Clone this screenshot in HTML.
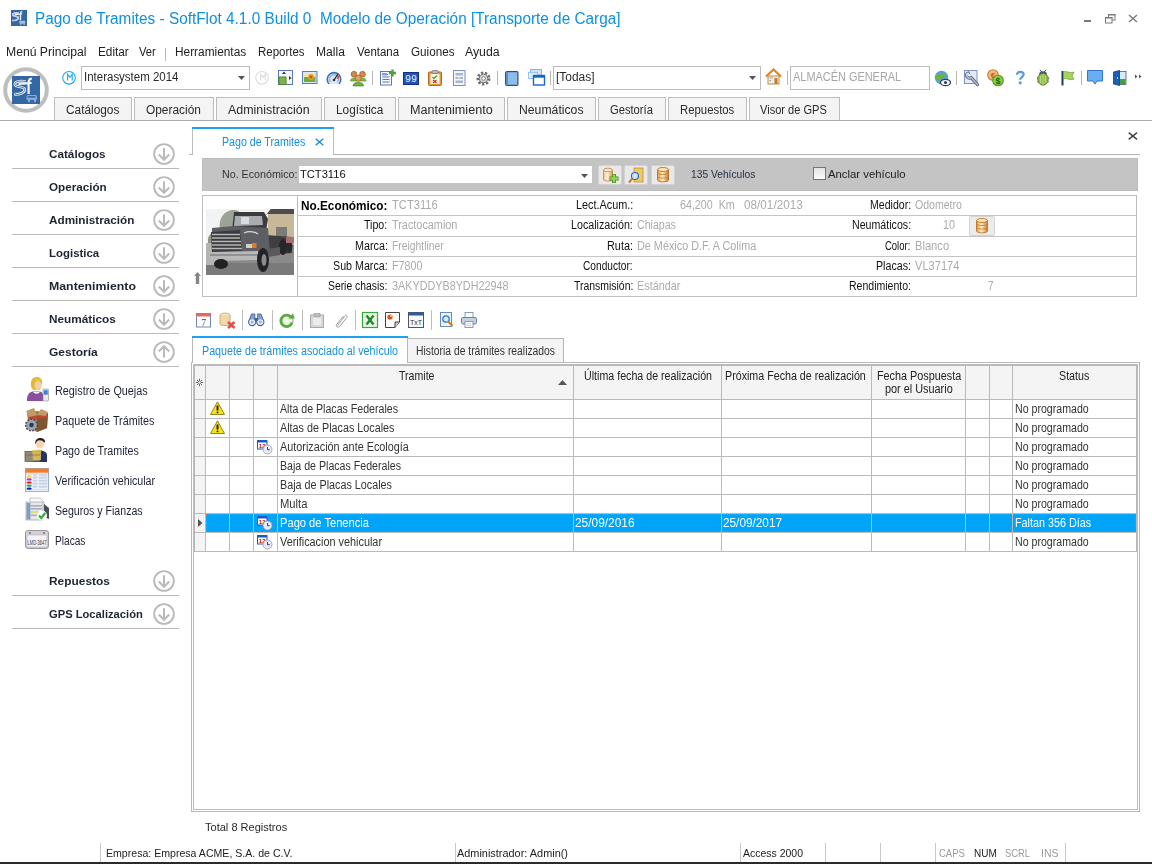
<!DOCTYPE html>
<html><head><meta charset="utf-8"><style>
html,body{margin:0;padding:0;}
body{width:1152px;height:864px;overflow:hidden;position:relative;background:#fff;font-family:"Liberation Sans", sans-serif;}
.a{position:absolute;}
svg.a{overflow:visible;}
.t{position:absolute;white-space:nowrap;line-height:normal;transform-origin:0 0;}
.bl{display:inline-block;width:0;height:0;}
</style></head><body>
<svg class="a" style="left:11px;top:10px;" width="16" height="16" viewBox="0 0 16 16"><rect width="16" height="16" fill="#3368a4"/><g transform="scale(0.5714) translate(-12,-12)"><path d="M25.5 17.5 C20 16.2 14.5 17.5 14.8 20.5 C15.2 23.5 24.5 22 24.8 25.5 C25 29 19 30.5 15.5 30.5 L15 29" stroke="#eef2f8" stroke-width="2.8" fill="none"/><path d="M25.5 17.5 C20 16.2 14.5 17.5 14.8 20.5 C15.2 23.5 24.5 22 24.8 25.5 C25 29 19 30.5 15.5 30.5 L15 29" stroke="#7f9cc4" stroke-width="1" fill="none"/><path d="M28.6 30 V19 C28.6 15.5 30 14.5 31.8 14.8 M18.5 19.8 L31.5 18.8" stroke="#eef2f8" stroke-width="2.4" fill="none"/><rect x="26.5" y="31" width="10.5" height="5" rx="1.5" fill="#a8bedc"/><circle cx="29" cy="37" r="1.3" fill="#a8bedc"/><circle cx="35" cy="37" r="1.3" fill="#a8bedc"/></g></svg>
<div class="a" style="left:1084px;top:20px;width:7px;height:2px;background:#7a7a7a;"></div>
<svg class="a" style="left:1104px;top:13px;" width="12" height="11" viewBox="0 0 12 11"><rect x="4.5" y="1.5" width="6.5" height="5.5" fill="none" stroke="#7a7a7a" stroke-width="1"/><rect x="4" y="1" width="7.5" height="1.5" fill="#7a7a7a"/><rect x="1.5" y="4.5" width="6.5" height="5.5" fill="#fff" stroke="#7a7a7a" stroke-width="1"/><rect x="1" y="4" width="7.5" height="1.5" fill="#7a7a7a"/></svg>
<svg class="a" style="left:1128px;top:14px;" width="10" height="9" viewBox="0 0 10 9"><path d="M1 1 L9 8 M9 1 L1 8" stroke="#7a7a7a" stroke-width="1.4"/></svg>
<div class="a" style="left:165px;top:48px;width:1px;height:13px;background:#b9b9b9;"></div>
<svg class="a" style="left:0px;top:64px;" width="52" height="52" viewBox="0 0 52 52"><circle cx="26" cy="26" r="20.8" fill="#fff" stroke="#bebebe" stroke-width="4"/><rect x="12" y="12" width="28" height="28" fill="#3368a4"/><path d="M25.5 17.5 C20 16.2 14.5 17.5 14.8 20.5 C15.2 23.5 24.5 22 24.8 25.5 C25 29 19 30.5 15.5 30.5 L15 29" stroke="#f4f6fa" stroke-width="2.6" fill="none"/><path d="M25.5 17.5 C20 16.2 14.5 17.5 14.8 20.5 C15.2 23.5 24.5 22 24.8 25.5 C25 29 19 30.5 15.5 30.5 L15 29" stroke="#3368a4" stroke-width="0.9" fill="none"/><path d="M28.6 30 V19 C28.6 15.5 30 14.5 31.8 14.8 M18.5 19.8 L31.5 18.8" stroke="#f4f6fa" stroke-width="2.2" fill="none"/><rect x="26.5" y="31" width="10.5" height="5" rx="1.5" fill="#8eaad0"/><rect x="27.5" y="32" width="8" height="1.6" fill="#3368a4"/><circle cx="29" cy="37" r="1.2" fill="#8eaad0"/><circle cx="35" cy="37" r="1.2" fill="#8eaad0"/></svg>
<svg class="a" style="left:62px;top:71px;" width="15" height="15" viewBox="0 0 15 15"><circle cx="7" cy="6.8" r="6.3" fill="none" stroke="#16a6fb" stroke-width="1.1"/><path d="M5.6 9.4 V3.4 L7.9 6.4 L10.2 3.4 V9.4" stroke="#16a6fb" stroke-width="1.1" fill="none"/></svg>
<div class="a" style="left:81px;top:66px;width:169px;height:24px;background:#fff;border:1px solid #bcbcbc;box-sizing:border-box;"></div>
<svg class="a" style="left:238px;top:76px;" width="8" height="5" viewBox="0 0 8 5"><path d="M0 0 H7 L3.5 4 Z" fill="#555"/></svg>
<svg class="a" style="left:255px;top:71px;" width="15" height="15" viewBox="0 0 15 15"><circle cx="7" cy="6.8" r="6.3" fill="none" stroke="#dcdcdc" stroke-width="1.1"/><path d="M5.6 9.4 V3.4 L7.9 6.4 L10.2 3.4 V9.4" stroke="#dcdcdc" stroke-width="1.1" fill="none"/></svg>
<svg class="a" style="left:278px;top:70px;" width="16" height="16" viewBox="0 0 16 16"><rect x="0.5" y="0.5" width="14" height="14" fill="#f4f6fb" stroke="#5a78b8"/><rect x="1" y="7" width="7" height="7.5" fill="#7fb24a" stroke="#4d8a2a"/><path d="M4 4 L6 1.5 L8 4Z M11 6 L13.5 8 L11 10Z" fill="#333"/></svg>
<svg class="a" style="left:302px;top:71px;" width="16" height="13" viewBox="0 0 16 13"><rect x="0.5" y="0.5" width="14.5" height="12" fill="#dfe8f6" stroke="#5c7cb8"/><rect x="2" y="2" width="11.5" height="9" fill="#6fae3c"/><rect x="2" y="2" width="11.5" height="4" fill="#f0e6b0"/><circle cx="9" cy="6" r="3" fill="#e69a2a"/><circle cx="9" cy="6" r="1.3" fill="#c05a10"/></svg>
<svg class="a" style="left:326px;top:71px;" width="16" height="15" viewBox="0 0 16 15"><path d="M3 13 A6.8 6.8 0 1 1 13 13" fill="#dbe7f5" stroke="#3f73b8" stroke-width="1.6"/><path d="M4.5 11 A4.5 4.5 0 1 1 11.5 11" fill="none" stroke="#8fb6e6" stroke-width="1.5"/><path d="M8 9 L12 3" stroke="#222" stroke-width="1.3"/><path d="M11.5 8 L13 5" stroke="#e03a2a" stroke-width="1.6"/><circle cx="8" cy="9" r="1.3" fill="#333"/></svg>
<svg class="a" style="left:350px;top:70px;" width="17" height="16" viewBox="0 0 17 16"><path d="M0.5 11 C0.5 7 7 7 7 11Z M9.5 11 C9.5 7 16 7 16 11Z" fill="#7cbf4a" stroke="#4a8a2a" stroke-width="0.6"/><circle cx="4" cy="4.2" r="2.9" fill="#d08a4a" stroke="#8a5020" stroke-width="0.6"/><circle cx="12.5" cy="4.2" r="2.9" fill="#d08a4a" stroke="#8a5020" stroke-width="0.6"/><path d="M3 16 C3 11 13.5 11 13.5 16Z" fill="#6ab43a" stroke="#3e7a20" stroke-width="0.6"/><circle cx="8.2" cy="8.2" r="3.1" fill="#e0a060" stroke="#8a5020" stroke-width="0.6"/></svg>
<div class="a" style="left:372px;top:71px;width:1px;height:14px;background:#b5b5b5;"></div>
<svg class="a" style="left:380px;top:69px;" width="16" height="17" viewBox="0 0 16 17"><rect x="0.5" y="2.5" width="11" height="13.5" fill="#f5f8fc" stroke="#5a79b5"/><path d="M2.5 5.5 H8 M2.5 8 H9.5 M2.5 10.5 H9.5 M2.5 13 H9.5" stroke="#5a79b5" stroke-width="1"/><rect x="2" y="4" width="5" height="2.5" fill="#7fa3d8"/><path d="M12.5 0.5 V7.5 M9 4 H16" stroke="#4aa436" stroke-width="2.4"/></svg>
<svg class="a" style="left:403px;top:72px;" width="16" height="13" viewBox="0 0 16 13"><rect x="0" y="0" width="16" height="13" fill="#2154b8"/><rect x="0.5" y="0.5" width="15" height="12" fill="none" stroke="#11327a" stroke-width="1"/><text x="8" y="10.3" font-size="10" font-family="Liberation Mono" fill="#e6eeff" text-anchor="middle" textLength="12" lengthAdjust="spacingAndGlyphs">99</text></svg>
<svg class="a" style="left:428px;top:70px;" width="14" height="16" viewBox="0 0 14 16"><rect x="0.5" y="2" width="13" height="13.5" rx="1" fill="#e79a3c" stroke="#b9661a"/><rect x="2.5" y="4" width="9" height="10" fill="#fff6e6"/><rect x="4" y="0.5" width="6" height="3" rx="1" fill="#bbb" stroke="#777" stroke-width="0.8"/><path d="M4.5 7 L6 8.5 L9 5.5" stroke="#3a9a2a" stroke-width="1.2" fill="none"/><path d="M5 10 L8.5 13 M8.5 10 L5 13" stroke="#d02a2a" stroke-width="1.2"/></svg>
<svg class="a" style="left:453px;top:70px;" width="13" height="16" viewBox="0 0 13 16"><rect x="0.5" y="0.5" width="11.5" height="15" fill="#f2f5fa" stroke="#7b90b8"/><rect x="2.5" y="3" width="7.5" height="2.5" fill="#aab6cc"/><rect x="2.5" y="7" width="3" height="2" fill="#aab6cc"/><rect x="6.5" y="7" width="3.5" height="2" fill="#aab6cc"/><rect x="2.5" y="10.5" width="7.5" height="2.5" fill="#aab6cc"/></svg>
<svg class="a" style="left:476px;top:71px;" width="15" height="15" viewBox="0 0 15 15"><circle cx="7.5" cy="7.5" r="5.5" fill="none" stroke="#6d6d6d" stroke-width="3" stroke-dasharray="2.2 1.6"/><circle cx="7.5" cy="7.5" r="4.2" fill="#d8d8d8" stroke="#777" stroke-width="1"/><circle cx="7.5" cy="7.5" r="1.8" fill="#fff" stroke="#666" stroke-width="0.8"/></svg>
<div class="a" style="left:497px;top:71px;width:1px;height:14px;background:#b5b5b5;"></div>
<svg class="a" style="left:505px;top:71px;" width="14" height="15" viewBox="0 0 14 15"><rect x="0.5" y="0.5" width="12.5" height="14" rx="1" fill="#5b8fd0" stroke="#2a4f86"/><rect x="3" y="1.5" width="9" height="12" fill="#8fbde8"/></svg>
<svg class="a" style="left:528px;top:69px;" width="17" height="17" viewBox="0 0 17 17"><rect x="2.5" y="0.5" width="11" height="8" fill="#cfe3f8" stroke="#88b4e6"/><rect x="0.5" y="3.5" width="9" height="6" fill="#e0eefc" stroke="#9cc4ee"/><rect x="5.5" y="6.5" width="11" height="9.5" fill="#fff" stroke="#1b64c8" stroke-width="1.4"/><rect x="5.5" y="6.5" width="11" height="2.2" fill="#1b64c8"/></svg>
<div class="a" style="left:550px;top:71px;width:1px;height:14px;background:#b5b5b5;"></div>
<div class="a" style="left:553px;top:66px;width:208px;height:24px;background:#fff;border:1px solid #bcbcbc;box-sizing:border-box;"></div>
<svg class="a" style="left:749px;top:76px;" width="8" height="5" viewBox="0 0 8 5"><path d="M0 0 H7 L3.5 4 Z" fill="#555"/></svg>
<svg class="a" style="left:765px;top:68px;" width="17" height="17" viewBox="0 0 17 17"><path d="M1 8.5 L8.5 1.5 L16 8.5" stroke="#e0861e" stroke-width="2.2" fill="none"/><rect x="3" y="8" width="11" height="8" fill="#f4efe2" stroke="#c98a3a"/><rect x="9.5" y="10" width="3" height="6" fill="#c47a2a"/><path d="M4.5 10 h1.5 M4.5 12.5 h1.5 M6.5 10 h1.5" stroke="#7aa0c8" stroke-width="1.2"/></svg>
<div class="a" style="left:787px;top:71px;width:1px;height:14px;background:#b5b5b5;"></div>
<div class="a" style="left:790px;top:66px;width:140px;height:24px;background:#fff;border:1px solid #bcbcbc;box-sizing:border-box;"></div>
<svg class="a" style="left:934px;top:70px;" width="17" height="17" viewBox="0 0 17 17"><circle cx="7.5" cy="7.5" r="6.8" fill="#5aa0d8"/><path d="M2 5 C4 3 6 6 8 4 C9 3 11 3 12 5 C11 8 8 7 7 10 C6 12 3 10 2 8Z" fill="#6db43a"/><ellipse cx="11.5" cy="12.5" rx="5" ry="3.2" fill="#fff" stroke="#2a3f70" stroke-width="1.3"/><circle cx="11.5" cy="12.5" r="1.6" fill="#2a3f70"/></svg>
<div class="a" style="left:956px;top:71px;width:1px;height:14px;background:#b5b5b5;"></div>
<svg class="a" style="left:964px;top:70px;" width="17" height="17" viewBox="0 0 17 17"><rect x="0.5" y="0.5" width="12.5" height="13" fill="#e6ecf6" stroke="#7d95c4" stroke-width="1"/><path d="M4.2 3 C2 3.5 1.8 6.5 3.8 7.6 C5.2 8.4 6.5 8 7.2 7.6 L13.5 14.6" stroke="#5d6f8c" stroke-width="3.2" fill="none" stroke-linecap="round"/><path d="M4.2 3 C2 3.5 1.8 6.5 3.8 7.6 C5.2 8.4 6.5 8 7.2 7.6 L13.5 14.6" stroke="#b8c6dc" stroke-width="1.3" fill="none" stroke-linecap="round"/><circle cx="4" cy="4.5" r="1.3" fill="#e6ecf6"/></svg>
<svg class="a" style="left:987px;top:69px;" width="17" height="17" viewBox="0 0 17 17"><circle cx="6" cy="6" r="5.3" fill="#f3b97a" stroke="#d5782a" stroke-width="1.1"/><text x="6" y="9" font-size="8" font-family="Liberation Sans" fill="#c9561a" text-anchor="middle" font-weight="bold">€</text><circle cx="11" cy="11.5" r="5.3" fill="#8dcf3f" stroke="#4e9a1e" stroke-width="1.1"/><text x="11" y="15" font-size="9" font-family="Liberation Sans" fill="#1e5a0a" text-anchor="middle" font-weight="bold">$</text></svg>
<svg class="a" style="left:1015px;top:70px;" width="10" height="15" viewBox="0 0 10 15"><path d="M2 4.8 C1.8 1 8.8 0.8 8.6 4.5 C8.4 7 5.2 7.2 5.2 9.8" stroke="#5a9ae0" stroke-width="2.3" fill="none"/><circle cx="5.2" cy="12.8" r="1.6" fill="#5a9ae0"/></svg>
<svg class="a" style="left:1036px;top:69px;" width="14" height="17" viewBox="0 0 14 17"><path d="M4 0.8 L5.8 3.2 M10 0.8 L8.2 3.2" stroke="#2a3a5a" stroke-width="0.9"/><path d="M0.8 9 H2.5 M11.5 9 H13.2 M1.2 13 L2.8 12 M12.8 13 L11.2 12" stroke="#2a3a5a" stroke-width="0.9"/><ellipse cx="7" cy="5" rx="3.8" ry="2.8" fill="#4a5a78"/><ellipse cx="7" cy="10.2" rx="5.2" ry="6" fill="#92c04a" stroke="#4a6a2a" stroke-width="0.8"/><path d="M7 5 V16 M4.5 7 V14 M9.5 7 V14" stroke="#c8e490" stroke-width="0.7"/></svg>
<svg class="a" style="left:1061px;top:70px;" width="14" height="16" viewBox="0 0 14 16"><path d="M1.5 1 V15.5" stroke="#223a5a" stroke-width="2"/><path d="M2.5 2 C5 0 8 4 13 2 L11 6 L13 9 C8 11 5 7 2.5 9Z" fill="#a6d45c" stroke="#6a9a32" stroke-width="0.7"/></svg>
<div class="a" style="left:1081px;top:71px;width:1px;height:14px;background:#b5b5b5;"></div>
<svg class="a" style="left:1087px;top:70px;" width="17" height="16" viewBox="0 0 17 16"><path d="M0.5 0.5 H15.5 V11 H10 L8 14 L6 11 H0.5Z" fill="#6aaef0" stroke="#2f75c9" stroke-width="1"/></svg>
<svg class="a" style="left:1113px;top:70px;" width="14" height="16" viewBox="0 0 14 16"><rect x="6" y="1.5" width="7" height="13" fill="#d8ecf8" stroke="#555" stroke-width="0.8"/><rect x="6.5" y="9" width="6" height="5" fill="#3da23a"/><path d="M0.5 2 L6.5 0.5 V15.5 L0.5 14Z" fill="#1e5fb8" stroke="#123f80" stroke-width="0.8"/><circle cx="4.5" cy="8" r="0.7" fill="#fff"/></svg>
<svg class="a" style="left:1135px;top:74px;" width="7" height="6" viewBox="0 0 7 6"><path d="M0 0.5 L2.5 2.5 L0 4.5Z M4 0.5 L6.5 2.5 L4 4.5Z" fill="#555"/></svg>
<div class="a" style="left:0px;top:120px;width:1152px;height:1px;background:#ababab;"></div>
<div class="a" style="left:54px;top:97px;width:78px;height:23px;background:#f4f4f4;border:1px solid #bdbdbd;box-sizing:border-box;border-bottom:none;"></div>
<div class="a" style="left:134px;top:97px;width:80px;height:23px;background:#f4f4f4;border:1px solid #bdbdbd;box-sizing:border-box;border-bottom:none;"></div>
<div class="a" style="left:216px;top:97px;width:106px;height:23px;background:#f4f4f4;border:1px solid #bdbdbd;box-sizing:border-box;border-bottom:none;"></div>
<div class="a" style="left:324px;top:97px;width:72px;height:23px;background:#f4f4f4;border:1px solid #bdbdbd;box-sizing:border-box;border-bottom:none;"></div>
<div class="a" style="left:398px;top:97px;width:107px;height:23px;background:#f4f4f4;border:1px solid #bdbdbd;box-sizing:border-box;border-bottom:none;"></div>
<div class="a" style="left:507px;top:97px;width:89px;height:23px;background:#f4f4f4;border:1px solid #bdbdbd;box-sizing:border-box;border-bottom:none;"></div>
<div class="a" style="left:598px;top:97px;width:68px;height:23px;background:#f4f4f4;border:1px solid #bdbdbd;box-sizing:border-box;border-bottom:none;"></div>
<div class="a" style="left:668px;top:97px;width:79px;height:23px;background:#f4f4f4;border:1px solid #bdbdbd;box-sizing:border-box;border-bottom:none;"></div>
<div class="a" style="left:749px;top:97px;width:91px;height:23px;background:#f4f4f4;border:1px solid #bdbdbd;box-sizing:border-box;border-bottom:none;"></div>
<svg class="a" style="left:153px;top:142.9px;" width="22" height="22" viewBox="0 0 22 22"><circle cx="11" cy="11" r="9.85" fill="none" stroke="#bababa" stroke-width="1.9"/><path d="M11 5.2 V16.5 M5.8 11.5 L11 16.8 L16.2 11.5" stroke="#bababa" stroke-width="2" fill="none"/></svg>
<div class="a" style="left:12px;top:168px;width:167px;height:1px;background:#bababa;"></div>
<svg class="a" style="left:153px;top:175.9px;" width="22" height="22" viewBox="0 0 22 22"><circle cx="11" cy="11" r="9.85" fill="none" stroke="#bababa" stroke-width="1.9"/><path d="M11 5.2 V16.5 M5.8 11.5 L11 16.8 L16.2 11.5" stroke="#bababa" stroke-width="2" fill="none"/></svg>
<div class="a" style="left:12px;top:201px;width:167px;height:1px;background:#bababa;"></div>
<svg class="a" style="left:153px;top:208.9px;" width="22" height="22" viewBox="0 0 22 22"><circle cx="11" cy="11" r="9.85" fill="none" stroke="#bababa" stroke-width="1.9"/><path d="M11 5.2 V16.5 M5.8 11.5 L11 16.8 L16.2 11.5" stroke="#bababa" stroke-width="2" fill="none"/></svg>
<div class="a" style="left:12px;top:234px;width:167px;height:1px;background:#bababa;"></div>
<svg class="a" style="left:153px;top:241.9px;" width="22" height="22" viewBox="0 0 22 22"><circle cx="11" cy="11" r="9.85" fill="none" stroke="#bababa" stroke-width="1.9"/><path d="M11 5.2 V16.5 M5.8 11.5 L11 16.8 L16.2 11.5" stroke="#bababa" stroke-width="2" fill="none"/></svg>
<div class="a" style="left:12px;top:267px;width:167px;height:1px;background:#bababa;"></div>
<svg class="a" style="left:153px;top:274.9px;" width="22" height="22" viewBox="0 0 22 22"><circle cx="11" cy="11" r="9.85" fill="none" stroke="#bababa" stroke-width="1.9"/><path d="M11 5.2 V16.5 M5.8 11.5 L11 16.8 L16.2 11.5" stroke="#bababa" stroke-width="2" fill="none"/></svg>
<div class="a" style="left:12px;top:300px;width:167px;height:1px;background:#bababa;"></div>
<svg class="a" style="left:153px;top:307.9px;" width="22" height="22" viewBox="0 0 22 22"><circle cx="11" cy="11" r="9.85" fill="none" stroke="#bababa" stroke-width="1.9"/><path d="M11 5.2 V16.5 M5.8 11.5 L11 16.8 L16.2 11.5" stroke="#bababa" stroke-width="2" fill="none"/></svg>
<div class="a" style="left:12px;top:333px;width:167px;height:1px;background:#bababa;"></div>
<svg class="a" style="left:153px;top:340.9px;" width="22" height="22" viewBox="0 0 22 22"><circle cx="11" cy="11" r="9.85" fill="none" stroke="#bababa" stroke-width="1.9"/><path d="M11 16.5 V5.5 M5.8 10.5 L11 5.2 L16.2 10.5" stroke="#bababa" stroke-width="2" fill="none"/></svg>
<div class="a" style="left:12px;top:366px;width:167px;height:1px;background:#bababa;"></div>
<svg class="a" style="left:153px;top:569.9px;" width="22" height="22" viewBox="0 0 22 22"><circle cx="11" cy="11" r="9.85" fill="none" stroke="#bababa" stroke-width="1.9"/><path d="M11 5.2 V16.5 M5.8 11.5 L11 16.8 L16.2 11.5" stroke="#bababa" stroke-width="2" fill="none"/></svg>
<div class="a" style="left:12px;top:595px;width:167px;height:1px;background:#bababa;"></div>
<svg class="a" style="left:153px;top:602.9px;" width="22" height="22" viewBox="0 0 22 22"><circle cx="11" cy="11" r="9.85" fill="none" stroke="#bababa" stroke-width="1.9"/><path d="M11 5.2 V16.5 M5.8 11.5 L11 16.8 L16.2 11.5" stroke="#bababa" stroke-width="2" fill="none"/></svg>
<div class="a" style="left:12px;top:628px;width:167px;height:1px;background:#bababa;"></div>
<svg class="a" style="left:25px;top:376px;" width="24" height="26" viewBox="0 0 24 26"><path d="M2 25 C1.5 17 6 15 11.5 15 C17 15 19 17 19 25Z" fill="#8a4ea0"/><path d="M8 15.5 C9 18.5 14 18.5 15 15.5Z" fill="#fff"/><path d="M6.5 12 C4.5 4 8 1 12 1 C16.5 1 18 5 16.5 9 L15 14 L8.5 14Z" fill="#e2b830"/><ellipse cx="13" cy="9.5" rx="3.6" ry="4.6" fill="#f4cfa8"/><path d="M9 4 C11 2 15 2 16.5 5 L13 5Z" fill="#e8c040"/><rect x="18" y="13" width="5.5" height="12" rx="0.8" fill="#e8e8e8" stroke="#888" stroke-width="0.6"/><rect x="18.8" y="14.2" width="3.9" height="4.5" fill="#3a80d8"/></svg>
<svg class="a" style="left:25px;top:407px;" width="24" height="26" viewBox="0 0 24 26"><path d="M2 6 L12 4 L23 6 L22 21 L12 25 L4 21Z" fill="#a47648"/><path d="M12 9 L23 6 L22 21 L12 25Z" fill="#7e5630"/><path d="M1 4 L9 1 L12 8 L4 10Z M23 5 L16 2 L12 8 L21 9Z" fill="#c29a68"/><path d="M4 10 L12 9 L22 9 L22 11 L12 11.5 L4 12Z" fill="#c84030"/><circle cx="6.5" cy="18" r="5.8" fill="#9ea4ae" stroke="#3c4a6a" stroke-width="1.6" stroke-dasharray="1.8 1.4"/><circle cx="6.5" cy="18" r="2.3" fill="#333a44"/></svg>
<svg class="a" style="left:25px;top:436px;" width="24" height="26" viewBox="0 0 24 26"><path d="M8 26 V19 C8 13 22 13 22 19 V26Z" fill="#26336a"/><path d="M13.5 12 L15 17 L16.5 12Z" fill="#fff"/><ellipse cx="15" cy="7.5" rx="4.2" ry="4.8" fill="#f7d3b4"/><path d="M10.3 7.5 C9 1 20 0 20 5.5 L19.3 7 C18.5 4.5 16 4 14 4.2 C12 4.5 11 6 10.8 8Z" fill="#1e1e22"/><rect x="0" y="15.5" width="15" height="10" fill="#948a78" stroke="#5a5040" stroke-width="0.7"/><path d="M7 14 L16 13.5 L16 24 L8 24Z" fill="#e0c050" opacity="0.85"/><path d="M0 19 H15" stroke="#6a6050" stroke-width="0.6"/></svg>
<svg class="a" style="left:25px;top:468px;" width="24" height="24" viewBox="0 0 24 24"><rect x="0.5" y="0.5" width="23" height="23" fill="#eef3fb" stroke="#9ab0d4"/><rect x="0.5" y="0.5" width="23" height="4.2" fill="#f27a28"/><path d="M1 6 H23 M1 9.1 H23 M1 12.2 H23 M1 15.3 H23 M1 18.4 H23 M1 21.5 H23" stroke="#c4d2e8" stroke-width="0.7"/><path d="M8 7 H12 M14 7 H22 M8 10 H12 M14 10 H22 M8 13 H12 M14 13 H22 M8 16 H12 M14 16 H22 M8 19 H12 M14 19 H22" stroke="#a8b4c8" stroke-width="0.7"/><ellipse cx="4.2" cy="8.3" rx="2.6" ry="1.1" fill="#f0e020"/><ellipse cx="4.2" cy="11.4" rx="2.6" ry="1.1" fill="#e020c0"/><ellipse cx="4.2" cy="14.5" rx="2.6" ry="1.1" fill="#d01818"/><ellipse cx="4.2" cy="17.6" rx="2.6" ry="1.1" fill="#20b030"/><ellipse cx="4.2" cy="20.7" rx="2.6" ry="1.1" fill="#1020d0"/></svg>
<svg class="a" style="left:25px;top:497px;" width="25" height="25" viewBox="0 0 25 25"><path d="M5 1 H15 L19 5 V18 H5Z" fill="#fafafa" stroke="#b0b0b0" stroke-width="0.7"/><path d="M19 7 L24 11 V22 L19 20Z" fill="#4a4e56"/><rect x="1" y="5" width="17" height="18" fill="#e6e8ec" stroke="#9aa0aa" stroke-width="0.7"/><rect x="1.5" y="6" width="4" height="16.5" fill="#7e9cc4"/><rect x="6" y="8" width="11" height="1.6" fill="#a8b0bc"/><rect x="6" y="11" width="11" height="1.6" fill="#a8b0bc"/><rect x="6" y="14" width="11" height="2.2" fill="#e8e060"/><rect x="6" y="17.5" width="11" height="1.6" fill="#a8b0bc"/><circle cx="17" cy="18.5" r="5" fill="#fff"/><path d="M14 18.5 L16.3 21 L20.3 15.8" stroke="#2eb02e" stroke-width="2.2" fill="none"/></svg>
<svg class="a" style="left:25px;top:530px;" width="24" height="20" viewBox="0 0 24 20"><rect x="0.5" y="0.5" width="23" height="18" rx="2.5" fill="#d4d2d8" stroke="#9a98a2"/><rect x="2" y="5" width="20" height="12" rx="1" fill="#f4f2f6" stroke="#b4b2bc" stroke-width="0.6"/><circle cx="5" cy="3" r="0.9" fill="#666"/><circle cx="19" cy="3" r="0.9" fill="#666"/><text x="12" y="14.8" font-size="7.5" font-family="Liberation Sans" fill="#3a3640" text-anchor="middle" textLength="19" lengthAdjust="spacingAndGlyphs">LMD-3647</text></svg>
<div class="a" style="left:192px;top:127px;width:142px;height:2px;background:#1da1f2;"></div>
<div class="a" style="left:192px;top:129px;width:1px;height:26px;background:#bdbdbd;"></div>
<div class="a" style="left:333px;top:129px;width:1px;height:26px;background:#bdbdbd;"></div>
<div class="a" style="left:333px;top:154px;width:807px;height:1px;background:#b5b5b5;"></div>
<div class="a" style="left:189px;top:154px;width:4px;height:1px;background:#b5b5b5;"></div>
<svg class="a" style="left:315px;top:138px;" width="9" height="8" viewBox="0 0 9 8"><path d="M0.7 0.7 L8.3 7.3 M8.3 0.7 L0.7 7.3" stroke="#1590e0" stroke-width="1.4"/></svg>
<svg class="a" style="left:1128px;top:132px;" width="10" height="8" viewBox="0 0 10 8"><path d="M0.7 0.7 L9 7.3 M9 0.7 L0.7 7.3" stroke="#444" stroke-width="1.5"/></svg>
<div class="a" style="left:202px;top:158px;width:936px;height:33px;background:#c4c4c4;border:1px solid #bcbcbc;box-sizing:border-box;"></div>
<div class="a" style="left:299px;top:166px;width:293px;height:17px;background:#fff;"></div>
<svg class="a" style="left:581px;top:174px;" width="7" height="4" viewBox="0 0 7 4"><path d="M0 0 H7 L3.5 4 Z" fill="#555"/></svg>
<div class="a" style="left:598px;top:165px;width:24px;height:20px;background:#e9e9e9;border:1px solid #d2d2d2;box-sizing:border-box;border-radius:2px;"></div>
<div class="a" style="left:624px;top:165px;width:24px;height:20px;background:#e9e9e9;border:1px solid #d2d2d2;box-sizing:border-box;border-radius:2px;"></div>
<div class="a" style="left:651px;top:165px;width:24px;height:20px;background:#e9e9e9;border:1px solid #d2d2d2;box-sizing:border-box;border-radius:2px;"></div>
<svg class="a" style="left:602px;top:167px;" width="17" height="17" viewBox="0 0 17 17"><defs><linearGradient id="dbg" x1="0" x2="1"><stop offset="0" stop-color="#f0c890"/><stop offset="0.45" stop-color="#fff4dc"/><stop offset="1" stop-color="#d89858"/></linearGradient></defs><path d="M1.5 3 V12.5 C1.5 14.5 10.5 14.5 10.5 12.5 V3" fill="url(#dbg)" stroke="#c0804a" stroke-width="0.8"/><ellipse cx="6" cy="3" rx="4.5" ry="1.8" fill="#fbe6c4" stroke="#c0804a" stroke-width="0.8"/><path d="M12 7 V16 M7.5 11.5 H16.5" stroke="#4a8a20" stroke-width="4"/><path d="M12 7.6 V15.4 M8.1 11.5 H15.9" stroke="#98d050" stroke-width="2.4"/></svg>
<svg class="a" style="left:628px;top:167px;" width="17" height="17" viewBox="0 0 17 17"><rect x="6" y="1" width="9" height="14" fill="#f2c860" stroke="#c09030" stroke-width="0.8"/><circle cx="7" cy="9" r="3.5" fill="#cfe6fa" stroke="#2a6ab8" stroke-width="1.2"/><path d="M4.5 11.5 L1 15.5" stroke="#d07a20" stroke-width="2"/></svg>
<svg class="a" style="left:656px;top:167px;" width="14" height="16" viewBox="0 0 14 16"><defs><linearGradient id="dbg2" x1="0" x2="1"><stop offset="0" stop-color="#e89a40"/><stop offset="0.45" stop-color="#fff0c8"/><stop offset="1" stop-color="#d07a28"/></linearGradient></defs><path d="M1.5 2.5 V13 C1.5 15.5 12.5 15.5 12.5 13 V2.5" fill="url(#dbg2)" stroke="#b86a20" stroke-width="0.8"/><ellipse cx="7" cy="2.5" rx="5.5" ry="2" fill="#fde6b0" stroke="#b86a20" stroke-width="0.8"/><path d="M1.5 6 C1.5 8 12.5 8 12.5 6 M1.5 9.5 C1.5 11.5 12.5 11.5 12.5 9.5" stroke="#c07a30" stroke-width="0.8" fill="none"/></svg>
<div class="a" style="left:813px;top:167px;width:13px;height:13px;background:linear-gradient(#e4e4e4,#fafafa);border:1px solid #767676;box-sizing:border-box;"></div>
<div class="a" style="left:202px;top:195px;width:935px;height:102px;background:#fff;border:1px solid #bdbdbd;box-sizing:border-box;"></div>
<div class="a" style="left:297px;top:196px;width:1px;height:100px;background:#bdbdbd;"></div>
<div class="a" style="left:298px;top:215px;width:838px;height:1px;background:#c4c4c4;"></div>
<div class="a" style="left:298px;top:236px;width:838px;height:1px;background:#c4c4c4;"></div>
<div class="a" style="left:298px;top:256px;width:838px;height:1px;background:#c4c4c4;"></div>
<div class="a" style="left:298px;top:276px;width:838px;height:1px;background:#c4c4c4;"></div>
<div class="a" style="left:206px;top:209px;width:88px;height:66px;overflow:hidden;"><svg style="position:absolute;left:0;top:0;filter:blur(0.6px);" width="88" height="66" viewBox="0 0 88 66"><g>
<rect x="-4" y="-4" width="96" height="74" fill="#f2f3f3"/>
<path d="M14 20 C12 10 18 2 26 1 C34 0 38 6 36 14 L34 22 Z" fill="#9aa396"/>
<path d="M2 30 C3 24 8 22 11 26 L12 34 L2 36Z" fill="#8e9488"/>
<rect x="62" y="3" width="30" height="33" fill="#c7b899"/>
<path d="M60 6 L68 -4 H92 V5 H60Z" fill="#4d4d4f"/>
<rect x="70" y="18" width="11" height="11" fill="#7b7b78"/>
<rect x="-4" y="36" width="96" height="34" fill="#8a8a8a"/>
<rect x="-4" y="54" width="96" height="16" fill="#7a7a7a"/>
<rect x="0" y="34" width="10" height="22" fill="#b4b4b2"/>
<path d="M60 26 L86 28 L86 44 L60 46Z" fill="#3e3e40"/>
<ellipse cx="77" cy="38" rx="4" ry="8" fill="#262628"/><ellipse cx="83" cy="37" rx="3.5" ry="7" fill="#2a2a2c"/>
<rect x="80" y="28" width="8" height="6" fill="#b06a70"/>
<path d="M28 3 L58 3 L62 10 L60 22 L26 22Z" fill="#3a3b3d"/>
<path d="M29 7 L56 7 L57 16 L28 17Z" fill="#a9adb0"/>
<rect x="35" y="8" width="8" height="7" fill="#d8dcde"/>
<path d="M6 19 L28 17 L62 19 L64 44 L50 48 L6 46Z" fill="#5e5f62"/>
<path d="M5 23 L34 21 L36 42 L6 44Z" fill="#3c3c3e"/>
<path d="M6 25.5 H34 M6 29 H34 M6 32.5 H35 M6 36 H35 M6 39.5 H36" stroke="#b4b5b8" stroke-width="1.7"/>
<path d="M38 24 C42 22 48 22 52 25" stroke="#d8d8d8" stroke-width="1.2" fill="none"/>
<rect x="40" y="35" width="6" height="4" fill="#d0d0c8"/>
<rect x="46" y="34" width="4.5" height="5" fill="#e07828"/>
<path d="M3 43 L52 42 L53 51 L4 52Z" fill="#b8b8ba"/>
<path d="M4 46 H52" stroke="#6a6a6c" stroke-width="1"/>
<ellipse cx="15" cy="55" rx="7" ry="5" fill="#222224"/>
<ellipse cx="57" cy="51" rx="6" ry="12" fill="#232325"/>
<ellipse cx="58" cy="51" rx="2.5" ry="6" fill="#8c8c8e"/>
<path d="M62 40 L74 38 L74 46 L62 48Z" fill="#5a5a5c"/>
</g></svg></div>
<svg class="a" style="left:194px;top:272px;" width="8" height="12" viewBox="0 0 8 12"><path d="M3.5 0 L7 3.8 H5.2 V12 H1.8 V3.8 H0Z" fill="#858585"/></svg>
<div class="a" style="left:969px;top:216px;width:26px;height:20px;background:#ececec;border:1px solid #d4d4d4;box-sizing:border-box;border-radius:2px;"></div>
<svg class="a" style="left:975px;top:218px;" width="14" height="16" viewBox="0 0 14 16"><path d="M1.5 2.5 V13 C1.5 15.5 12.5 15.5 12.5 13 V2.5" fill="url(#dbg2)" stroke="#b86a20" stroke-width="0.8"/><ellipse cx="7" cy="2.5" rx="5.5" ry="2" fill="#fde6b0" stroke="#b86a20" stroke-width="0.8"/><path d="M1.5 6 C1.5 8 12.5 8 12.5 6 M1.5 9.5 C1.5 11.5 12.5 11.5 12.5 9.5" stroke="#c07a30" stroke-width="0.8" fill="none"/></svg>
<svg class="a" style="left:196px;top:312px;" width="16" height="16" viewBox="0 0 16 16"><rect x="0.5" y="1.5" width="14" height="13.5" fill="#fff" stroke="#6d88b8"/><rect x="0.5" y="1.5" width="14" height="3" fill="#e86a5a"/><text x="7.5" y="13.5" font-size="9.5" font-family="Liberation Serif" fill="#2a4a8a" text-anchor="middle">7</text></svg>
<svg class="a" style="left:219px;top:312px;" width="17" height="17" viewBox="0 0 17 17"><ellipse cx="6" cy="3" rx="5" ry="2" fill="#f8e8c8" stroke="#c0a060" stroke-width="0.8"/><path d="M1 3 V12 C1 14 11 14 11 12 V3" fill="#f0d8a8" stroke="#c0a060" stroke-width="0.8"/><path d="M9 10 L15.5 16 M15.5 10 L9 16" stroke="#e0504a" stroke-width="2.5"/></svg>
<div class="a" style="left:242px;top:310px;width:1px;height:20px;background:#bdbdbd;"></div>
<svg class="a" style="left:248px;top:313px;" width="17" height="14" viewBox="0 0 17 14"><circle cx="4.2" cy="9" r="3.6" fill="#e8eef8" stroke="#44609a" stroke-width="1.1"/><circle cx="12.3" cy="9" r="3.6" fill="#e8eef8" stroke="#44609a" stroke-width="1.1"/><path d="M1.5 6.5 L3.5 1 H6.8 V6 M15 6.5 L13 1 H9.7 V6" fill="#8aa0c8" stroke="#44609a" stroke-width="0.9"/><rect x="6.8" y="5" width="2.9" height="3" fill="#44609a"/><circle cx="4.2" cy="9" r="1.5" fill="#9ab2dc"/><circle cx="12.3" cy="9" r="1.5" fill="#9ab2dc"/></svg>
<div class="a" style="left:272px;top:310px;width:1px;height:20px;background:#bdbdbd;"></div>
<svg class="a" style="left:278px;top:312px;" width="18" height="17" viewBox="0 0 18 17"><circle cx="8.5" cy="8.8" r="6.6" fill="#eef6e6" stroke="#8a9a86" stroke-width="1"/><path d="M13.2 5.5 A5.6 5.6 0 1 0 14 10.5" fill="none" stroke="#58ac38" stroke-width="2.6"/><path d="M10.5 6.8 L16.8 6.5 L14.8 1.2Z" fill="#58ac38"/></svg>
<div class="a" style="left:302px;top:310px;width:1px;height:20px;background:#bdbdbd;"></div>
<svg class="a" style="left:310px;top:313px;" width="14" height="15" viewBox="0 0 14 15"><rect x="0.5" y="2" width="13" height="12.5" fill="#d8d8d8" stroke="#a8a8a8"/><rect x="4" y="0.5" width="6" height="3" fill="#bcbcbc" stroke="#999" stroke-width="0.6"/><rect x="3" y="5" width="8" height="7" fill="#ececec"/></svg>
<svg class="a" style="left:333px;top:312px;" width="15" height="16" viewBox="0 0 15 16"><path d="M4.5 13.5 L11.8 4.2 C13.2 2.4 15 4 13.6 5.8 L6.8 14.2 C5 16.4 2 14.4 3.8 12.2 L10.5 4" fill="none" stroke="#9a9a9a" stroke-width="1"/><path d="M4.5 13.5 L11.8 4.2" stroke="#cfcfcf" stroke-width="0.6"/></svg>
<div class="a" style="left:355px;top:310px;width:1px;height:20px;background:#bdbdbd;"></div>
<svg class="a" style="left:362px;top:312px;" width="16" height="16" viewBox="0 0 16 16"><rect x="0.5" y="0.5" width="15" height="15" fill="#eaf6e8" stroke="#3aa83a" stroke-width="1.2"/><path d="M4.5 3.5 L11.5 12.5 M11.5 3.5 L4.5 12.5" stroke="#1e8a2a" stroke-width="2.4"/></svg>
<svg class="a" style="left:385px;top:312px;" width="15" height="16" viewBox="0 0 15 16"><path d="M0.5 0.5 H14.5 V10 L10 15.5 H0.5Z" fill="#fbfbfb" stroke="#444" stroke-width="1"/><path d="M10 15.5 V10 H14.5" fill="#ccc" stroke="#444" stroke-width="1"/><circle cx="5" cy="5" r="2.6" fill="#e0483a"/><path d="M5 5 L5 2.4 A2.6 2.6 0 0 1 7.6 5Z" fill="#f0c030"/></svg>
<svg class="a" style="left:408px;top:312px;" width="16" height="16" viewBox="0 0 16 16"><rect x="0.5" y="0.5" width="15" height="15" fill="#f8f8f8" stroke="#555"/><rect x="0.5" y="0.5" width="15" height="3" fill="#2a5aa8"/><text x="8" y="12.5" font-size="7" font-family="Liberation Sans" fill="#333" text-anchor="middle">TxT</text></svg>
<div class="a" style="left:431px;top:310px;width:1px;height:20px;background:#bdbdbd;"></div>
<svg class="a" style="left:440px;top:312px;" width="14" height="16" viewBox="0 0 14 16"><rect x="0.5" y="0.5" width="11" height="14" fill="#eef4fc" stroke="#6a8ac0"/><circle cx="6" cy="7" r="3.2" fill="#d8ecfa" stroke="#2a7ad0" stroke-width="1.3"/><path d="M8.3 9.5 L12.5 14" stroke="#d07a20" stroke-width="2"/></svg>
<svg class="a" style="left:461px;top:312px;" width="16" height="16" viewBox="0 0 16 16"><rect x="4" y="0.5" width="8" height="5.5" fill="#fff" stroke="#7f92b0" stroke-width="0.9"/><rect x="0.5" y="5.5" width="15" height="6.5" rx="1.5" fill="#c4d2e6" stroke="#5e78a0" stroke-width="0.9"/><rect x="4" y="9.5" width="8" height="6" fill="#fff" stroke="#7f92b0" stroke-width="0.9"/><path d="M5.5 12 H10.5 M5.5 13.8 H10.5" stroke="#aab" stroke-width="0.6"/></svg>
<div class="a" style="left:191px;top:362px;width:949px;height:450px;background:#fff;border:1px solid #b8b8b8;box-sizing:border-box;"></div>
<div class="a" style="left:192px;top:362px;width:216px;height:1px;background:#fff;"></div>
<div class="a" style="left:193px;top:364px;width:945px;height:446px;background:#fff;border:1px solid #bcbcbc;box-sizing:border-box;"></div>
<div class="a" style="left:195px;top:366px;width:941px;height:33px;background:#f4f4f4;"></div>
<div class="a" style="left:194px;top:365px;width:943px;height:1px;background:#b8b8b8;"></div>
<div class="a" style="left:194px;top:365px;width:1px;height:187px;background:#b8b8b8;"></div>
<div class="a" style="left:1136px;top:365px;width:1px;height:187px;background:#b8b8b8;"></div>
<div class="a" style="left:206px;top:514px;width:930px;height:18px;background:#02a4f8;"></div>
<div class="a" style="left:206px;top:514px;width:930px;height:18px;border:1px dotted #f06a20;box-sizing:border-box;"></div>
<div class="a" style="left:205px;top:366px;width:1px;height:185px;background:#bababa;"></div>
<div class="a" style="left:229px;top:366px;width:1px;height:185px;background:#bababa;"></div>
<div class="a" style="left:253px;top:366px;width:1px;height:185px;background:#bababa;"></div>
<div class="a" style="left:277px;top:366px;width:1px;height:185px;background:#bababa;"></div>
<div class="a" style="left:573px;top:366px;width:1px;height:185px;background:#bababa;"></div>
<div class="a" style="left:721px;top:366px;width:1px;height:185px;background:#bababa;"></div>
<div class="a" style="left:871px;top:366px;width:1px;height:185px;background:#bababa;"></div>
<div class="a" style="left:965px;top:366px;width:1px;height:185px;background:#bababa;"></div>
<div class="a" style="left:989px;top:366px;width:1px;height:185px;background:#bababa;"></div>
<div class="a" style="left:1012px;top:366px;width:1px;height:185px;background:#bababa;"></div>
<div class="a" style="left:195px;top:399px;width:941px;height:1px;background:#bababa;"></div>
<div class="a" style="left:195px;top:418px;width:941px;height:1px;background:#bababa;"></div>
<div class="a" style="left:195px;top:437px;width:941px;height:1px;background:#bababa;"></div>
<div class="a" style="left:195px;top:456px;width:941px;height:1px;background:#bababa;"></div>
<div class="a" style="left:195px;top:475px;width:941px;height:1px;background:#bababa;"></div>
<div class="a" style="left:195px;top:494px;width:941px;height:1px;background:#bababa;"></div>
<div class="a" style="left:195px;top:513px;width:941px;height:1px;background:#bababa;"></div>
<div class="a" style="left:195px;top:532px;width:941px;height:1px;background:#bababa;"></div>
<div class="a" style="left:195px;top:551px;width:941px;height:1px;background:#bababa;"></div>
<div class="a" style="left:195px;top:400px;width:10px;height:151px;background:#f4f4f4;"></div>
<div class="a" style="left:195px;top:399px;width:10px;height:1px;background:#bababa;"></div>
<div class="a" style="left:195px;top:418px;width:10px;height:1px;background:#bababa;"></div>
<div class="a" style="left:195px;top:437px;width:10px;height:1px;background:#bababa;"></div>
<div class="a" style="left:195px;top:456px;width:10px;height:1px;background:#bababa;"></div>
<div class="a" style="left:195px;top:475px;width:10px;height:1px;background:#bababa;"></div>
<div class="a" style="left:195px;top:494px;width:10px;height:1px;background:#bababa;"></div>
<div class="a" style="left:195px;top:513px;width:10px;height:1px;background:#bababa;"></div>
<div class="a" style="left:195px;top:532px;width:10px;height:1px;background:#bababa;"></div>
<div class="a" style="left:195px;top:551px;width:10px;height:1px;background:#bababa;"></div>
<svg class="a" style="left:198px;top:519px;" width="5" height="8" viewBox="0 0 5 8"><path d="M0 0 L4.5 4 L0 8Z" fill="#555"/></svg>
<svg class="a" style="left:195px;top:378px;" width="9" height="9" viewBox="0 0 9 9"><path d="M4.5 0.8 V8.2 M0.8 4.5 H8.2 M1.9 1.9 L7.1 7.1 M7.1 1.9 L1.9 7.1" stroke="#666" stroke-width="1"/><circle cx="4.5" cy="4.5" r="1.2" fill="#f4f4f4"/></svg>
<svg class="a" style="left:558px;top:380px;" width="9" height="5" viewBox="0 0 9 5"><path d="M0 5 L4.5 0 L9 5Z" fill="#555"/></svg>
<svg class="a" style="left:210px;top:401px;" width="15" height="14" viewBox="0 0 15 14"><path d="M7.5 0.8 L14.5 13.5 H0.5Z" fill="#f8e020" stroke="#8a7a10" stroke-width="0.9" stroke-linejoin="round"/><path d="M7.5 4.5 V9.5" stroke="#111" stroke-width="1.8"/><circle cx="7.5" cy="11.3" r="0.9" fill="#111"/></svg>
<svg class="a" style="left:210px;top:420px;" width="15" height="14" viewBox="0 0 15 14"><path d="M7.5 0.8 L14.5 13.5 H0.5Z" fill="#f8e020" stroke="#8a7a10" stroke-width="0.9" stroke-linejoin="round"/><path d="M7.5 4.5 V9.5" stroke="#111" stroke-width="1.8"/><circle cx="7.5" cy="11.3" r="0.9" fill="#111"/></svg>
<svg class="a" style="left:257px;top:440px;" width="16" height="15" viewBox="0 0 16 15"><rect x="0.5" y="0.5" width="9.5" height="8.5" fill="#fff" stroke="#1a5ac8"/><rect x="0.5" y="0.5" width="9.5" height="2" fill="#1a5ac8"/><text x="5.2" y="8" font-size="6" font-family="Liberation Sans" font-weight="bold" fill="#a01010" text-anchor="middle">12</text><circle cx="10.5" cy="9.5" r="4.5" fill="#e8e8f8" stroke="#999" stroke-width="0.8"/><path d="M10.5 7 V9.7 H12.8" stroke="#333" stroke-width="0.9" fill="none"/></svg>
<svg class="a" style="left:257px;top:516px;" width="16" height="15" viewBox="0 0 16 15"><rect x="0.5" y="0.5" width="9.5" height="8.5" fill="#fff" stroke="#1a5ac8"/><rect x="0.5" y="0.5" width="9.5" height="2" fill="#1a5ac8"/><text x="5.2" y="8" font-size="6" font-family="Liberation Sans" font-weight="bold" fill="#a01010" text-anchor="middle">12</text><circle cx="10.5" cy="9.5" r="4.5" fill="#e8e8f8" stroke="#999" stroke-width="0.8"/><path d="M10.5 7 V9.7 H12.8" stroke="#333" stroke-width="0.9" fill="none"/></svg>
<svg class="a" style="left:257px;top:535px;" width="16" height="15" viewBox="0 0 16 15"><rect x="0.5" y="0.5" width="9.5" height="8.5" fill="#fff" stroke="#1a5ac8"/><rect x="0.5" y="0.5" width="9.5" height="2" fill="#1a5ac8"/><text x="5.2" y="8" font-size="6" font-family="Liberation Sans" font-weight="bold" fill="#a01010" text-anchor="middle">12</text><circle cx="10.5" cy="9.5" r="4.5" fill="#e8e8f8" stroke="#999" stroke-width="0.8"/><path d="M10.5 7 V9.7 H12.8" stroke="#333" stroke-width="0.9" fill="none"/></svg>
<div class="a" style="left:192px;top:336px;width:216px;height:2px;background:#1da1f2;"></div>
<div class="a" style="left:192px;top:338px;width:1px;height:25px;background:#b8b8b8;"></div>
<div class="a" style="left:407px;top:338px;width:157px;height:25px;background:#f4f4f4;border:1px solid #b8b8b8;box-sizing:border-box;"></div>
<div class="a" style="left:100px;top:843px;width:1px;height:19px;background:#c8c8c8;"></div>
<div class="a" style="left:455px;top:843px;width:1px;height:19px;background:#c8c8c8;"></div>
<div class="a" style="left:740px;top:843px;width:1px;height:19px;background:#c8c8c8;"></div>
<div class="a" style="left:825px;top:843px;width:1px;height:19px;background:#c8c8c8;"></div>
<div class="a" style="left:880px;top:843px;width:1px;height:19px;background:#c8c8c8;"></div>
<div class="a" style="left:935px;top:843px;width:1px;height:19px;background:#c8c8c8;"></div>
<div class="a" style="left:1065px;top:843px;width:1px;height:19px;background:#c8c8c8;"></div>
<div class="a" style="left:0px;top:862px;width:1152px;height:2px;background:#2b2b2b;"></div>
<span class="t" id="t0" style="font-size:16px;font-weight:400;color:#0e8fe4;left:34.60px;top:10.20px;transform:scaleX(0.9592);">Pago de Tramites - SoftFlot 4.1.0 Build 0&nbsp;&nbsp;Modelo de Operación [Transporte de Carga]<i class="bl"></i></span>
<span class="t" id="t1" style="font-size:12px;font-weight:400;color:#222;left:5.70px;top:44.50px;transform:scaleX(1.0142);">Menú Principal<i class="bl"></i></span>
<span class="t" id="t2" style="font-size:12px;font-weight:400;color:#222;left:97.60px;top:44.50px;transform:scaleX(0.9822);">Editar<i class="bl"></i></span>
<span class="t" id="t3" style="font-size:12px;font-weight:400;color:#222;left:139.40px;top:44.50px;transform:scaleX(0.9325);">Ver<i class="bl"></i></span>
<span class="t" id="t4" style="font-size:12px;font-weight:400;color:#222;left:174.80px;top:44.50px;transform:scaleX(0.9885);">Herramientas<i class="bl"></i></span>
<span class="t" id="t5" style="font-size:12px;font-weight:400;color:#222;left:257.60px;top:44.50px;transform:scaleX(0.9548);">Reportes<i class="bl"></i></span>
<span class="t" id="t6" style="font-size:12px;font-weight:400;color:#222;left:316.00px;top:44.50px;transform:scaleX(1.0074);">Malla<i class="bl"></i></span>
<span class="t" id="t7" style="font-size:12px;font-weight:400;color:#222;left:356.80px;top:44.50px;transform:scaleX(0.9558);">Ventana<i class="bl"></i></span>
<span class="t" id="t8" style="font-size:12px;font-weight:400;color:#222;left:410.80px;top:44.50px;transform:scaleX(0.9731);">Guiones<i class="bl"></i></span>
<span class="t" id="t9" style="font-size:12px;font-weight:400;color:#222;left:465.40px;top:44.50px;transform:scaleX(1.0233);">Ayuda<i class="bl"></i></span>
<span class="t" id="t10" style="font-size:12px;font-weight:400;color:#2a2a2a;left:83.70px;top:70.00px;transform:scaleX(0.9573);">Interasystem 2014<i class="bl"></i></span>
<span class="t" id="t11" style="font-size:12px;font-weight:400;color:#2a2a2a;left:556.40px;top:70.00px;transform:scaleX(0.9948);">[Todas]<i class="bl"></i></span>
<span class="t" id="t12" style="font-size:12px;font-weight:400;color:#a6a6a6;left:793.20px;top:70.00px;transform:scaleX(0.9115);">ALMACÉN GENERAL<i class="bl"></i></span>
<span class="t" id="t13" style="font-size:12px;font-weight:400;color:#2a2a2a;left:65.90px;top:103.00px;transform:scaleX(0.9880);">Catálogos<i class="bl"></i></span>
<span class="t" id="t14" style="font-size:12px;font-weight:400;color:#2a2a2a;left:145.80px;top:103.00px;transform:scaleX(0.9914);">Operación<i class="bl"></i></span>
<span class="t" id="t15" style="font-size:12px;font-weight:400;color:#2a2a2a;left:227.50px;top:103.00px;transform:scaleX(1.0368);">Administración<i class="bl"></i></span>
<span class="t" id="t16" style="font-size:12px;font-weight:400;color:#2a2a2a;left:335.90px;top:103.00px;transform:scaleX(0.9848);">Logística<i class="bl"></i></span>
<span class="t" id="t17" style="font-size:12px;font-weight:400;color:#2a2a2a;left:409.60px;top:103.00px;transform:scaleX(1.0506);">Mantenimiento<i class="bl"></i></span>
<span class="t" id="t18" style="font-size:12px;font-weight:400;color:#2a2a2a;left:518.70px;top:103.00px;transform:scaleX(1.0180);">Neumáticos<i class="bl"></i></span>
<span class="t" id="t19" style="font-size:12px;font-weight:400;color:#2a2a2a;left:609.90px;top:103.00px;transform:scaleX(0.9320);">Gestoría<i class="bl"></i></span>
<span class="t" id="t20" style="font-size:12px;font-weight:400;color:#2a2a2a;left:679.70px;top:103.00px;transform:scaleX(0.9464);">Repuestos<i class="bl"></i></span>
<span class="t" id="t21" style="font-size:12px;font-weight:400;color:#2a2a2a;left:760.40px;top:103.00px;transform:scaleX(0.9230);">Visor de GPS<i class="bl"></i></span>
<span class="t" id="t22" style="font-size:11.5px;font-weight:700;color:#1e2532;left:49.40px;top:147.80px;transform:scaleX(1.0181);">Catálogos<i class="bl"></i></span>
<span class="t" id="t23" style="font-size:11.5px;font-weight:700;color:#1e2532;left:49.40px;top:180.80px;transform:scaleX(1.0142);">Operación<i class="bl"></i></span>
<span class="t" id="t24" style="font-size:11.5px;font-weight:700;color:#1e2532;left:49.40px;top:213.80px;transform:scaleX(1.0201);">Administración<i class="bl"></i></span>
<span class="t" id="t25" style="font-size:11.5px;font-weight:700;color:#1e2532;left:49.40px;top:246.80px;transform:scaleX(0.9944);">Logistica<i class="bl"></i></span>
<span class="t" id="t26" style="font-size:11.5px;font-weight:700;color:#1e2532;left:49.40px;top:279.80px;transform:scaleX(1.0710);">Mantenimiento<i class="bl"></i></span>
<span class="t" id="t27" style="font-size:11.5px;font-weight:700;color:#1e2532;left:49.40px;top:312.80px;transform:scaleX(1.0240);">Neumáticos<i class="bl"></i></span>
<span class="t" id="t28" style="font-size:11.5px;font-weight:700;color:#1e2532;left:49.40px;top:345.90px;transform:scaleX(1.0435);">Gestoría<i class="bl"></i></span>
<span class="t" id="t29" style="font-size:11.5px;font-weight:700;color:#1e2532;left:49.40px;top:575.00px;transform:scaleX(1.0375);">Repuestos<i class="bl"></i></span>
<span class="t" id="t30" style="font-size:11.5px;font-weight:700;color:#1e2532;left:49.40px;top:608.00px;transform:scaleX(0.9720);">GPS Localización<i class="bl"></i></span>
<span class="t" id="t31" style="font-size:12px;font-weight:400;color:#1e2236;left:55.00px;top:383.70px;transform:scaleX(0.9023);">Registro de Quejas<i class="bl"></i></span>
<span class="t" id="t32" style="font-size:12px;font-weight:400;color:#1e2236;left:55.00px;top:413.70px;transform:scaleX(0.8976);">Paquete de Trámites<i class="bl"></i></span>
<span class="t" id="t33" style="font-size:12px;font-weight:400;color:#1e2236;left:55.00px;top:443.70px;transform:scaleX(0.8909);">Pago de Tramites<i class="bl"></i></span>
<span class="t" id="t34" style="font-size:12px;font-weight:400;color:#1e2236;left:55.00px;top:473.70px;transform:scaleX(0.8879);">Verificación vehicular<i class="bl"></i></span>
<span class="t" id="t35" style="font-size:12px;font-weight:400;color:#1e2236;left:55.00px;top:503.70px;transform:scaleX(0.8814);">Seguros y Fianzas<i class="bl"></i></span>
<span class="t" id="t36" style="font-size:12px;font-weight:400;color:#1e2236;left:55.00px;top:533.70px;transform:scaleX(0.8437);">Placas<i class="bl"></i></span>
<span class="t" id="t37" style="font-size:12.5px;font-weight:400;color:#1590e0;left:222.20px;top:135.00px;transform:scaleX(0.8503);">Pago de Tramites<i class="bl"></i></span>
<span class="t" id="t38" style="font-size:11.5px;font-weight:400;color:#333;left:221.90px;top:167.80px;transform:scaleX(0.9299);">No. Económico:<i class="bl"></i></span>
<span class="t" id="t39" style="font-size:11.5px;font-weight:400;color:#111;left:300.20px;top:167.70px;transform:scaleX(0.9683);">TCT3116<i class="bl"></i></span>
<span class="t" id="t40" style="font-size:11.5px;font-weight:400;color:#223048;left:691.20px;top:167.70px;transform:scaleX(0.8912);">135 Vehículos<i class="bl"></i></span>
<span class="t" id="t41" style="font-size:11.5px;font-weight:400;color:#222;left:828.20px;top:168.00px;transform:scaleX(0.9857);">Anclar vehículo<i class="bl"></i></span>
<span class="t" id="t42" style="font-size:13px;font-weight:700;color:#000;left:300.90px;top:198.00px;transform:scaleX(0.9072);">No.Económico:<i class="bl"></i></span>
<span class="t" id="t43" style="font-size:12.5px;font-weight:400;color:#111;left:364.40px;top:218.00px;transform:scaleX(0.8489);">Tipo:<i class="bl"></i></span>
<span class="t" id="t44" style="font-size:12.5px;font-weight:400;color:#111;left:354.70px;top:239.00px;transform:scaleX(0.8612);">Marca:<i class="bl"></i></span>
<span class="t" id="t45" style="font-size:12.5px;font-weight:400;color:#111;left:332.90px;top:259.00px;transform:scaleX(0.8557);">Sub Marca:<i class="bl"></i></span>
<span class="t" id="t46" style="font-size:12.5px;font-weight:400;color:#111;left:328.30px;top:279.00px;transform:scaleX(0.8286);">Serie chasis:<i class="bl"></i></span>
<span class="t" id="t47" style="font-size:12.5px;font-weight:400;color:#ababab;left:392.10px;top:198.00px;transform:scaleX(0.8928);">TCT3116<i class="bl"></i></span>
<span class="t" id="t48" style="font-size:12.5px;font-weight:400;color:#ababab;left:392.10px;top:218.00px;transform:scaleX(0.8689);">Tractocamion<i class="bl"></i></span>
<span class="t" id="t49" style="font-size:12.5px;font-weight:400;color:#ababab;left:392.10px;top:239.00px;transform:scaleX(0.8268);">Freightliner<i class="bl"></i></span>
<span class="t" id="t50" style="font-size:12.5px;font-weight:400;color:#ababab;left:392.10px;top:259.00px;transform:scaleX(0.8603);">F7800<i class="bl"></i></span>
<span class="t" id="t51" style="font-size:12.5px;font-weight:400;color:#ababab;left:392.10px;top:279.00px;transform:scaleX(0.8643);">3AKYDDYB8YDH22948<i class="bl"></i></span>
<span class="t" id="t52" style="font-size:12.5px;font-weight:400;color:#111;left:575.60px;top:198.00px;transform:scaleX(0.8682);">Lect.Acum.:<i class="bl"></i></span>
<span class="t" id="t53" style="font-size:12.5px;font-weight:400;color:#111;left:571.10px;top:218.00px;transform:scaleX(0.8552);">Localización:<i class="bl"></i></span>
<span class="t" id="t54" style="font-size:12.5px;font-weight:400;color:#111;left:606.90px;top:239.00px;transform:scaleX(0.8698);">Ruta:<i class="bl"></i></span>
<span class="t" id="t55" style="font-size:12.5px;font-weight:400;color:#111;left:583.20px;top:259.00px;transform:scaleX(0.8127);">Conductor:<i class="bl"></i></span>
<span class="t" id="t56" style="font-size:12.5px;font-weight:400;color:#111;left:573.50px;top:279.00px;transform:scaleX(0.8355);">Transmisión:<i class="bl"></i></span>
<span class="t" id="t57" style="font-size:12.5px;font-weight:400;color:#ababab;left:680.10px;top:198.00px;transform:scaleX(0.8555);">64,200&nbsp;&nbsp;Km<i class="bl"></i></span>
<span class="t" id="t58" style="font-size:12.5px;font-weight:400;color:#ababab;left:744.00px;top:198.00px;transform:scaleX(0.9399);">08/01/2013<i class="bl"></i></span>
<span class="t" id="t59" style="font-size:12.5px;font-weight:400;color:#ababab;left:637.40px;top:218.00px;transform:scaleX(0.8480);">Chiapas<i class="bl"></i></span>
<span class="t" id="t60" style="font-size:12.5px;font-weight:400;color:#ababab;left:637.40px;top:239.00px;transform:scaleX(0.8666);">De México D.F. A Colima<i class="bl"></i></span>
<span class="t" id="t61" style="font-size:12.5px;font-weight:400;color:#ababab;left:637.40px;top:279.00px;transform:scaleX(0.8675);">Estándar<i class="bl"></i></span>
<span class="t" id="t62" style="font-size:12.5px;font-weight:400;color:#111;left:869.60px;top:198.00px;transform:scaleX(0.8450);">Medidor:<i class="bl"></i></span>
<span class="t" id="t63" style="font-size:12.5px;font-weight:400;color:#111;left:851.60px;top:218.00px;transform:scaleX(0.8506);">Neumáticos:<i class="bl"></i></span>
<span class="t" id="t64" style="font-size:12.5px;font-weight:400;color:#111;left:885.40px;top:239.00px;transform:scaleX(0.7588);">Color:<i class="bl"></i></span>
<span class="t" id="t65" style="font-size:12.5px;font-weight:400;color:#111;left:875.70px;top:259.00px;transform:scaleX(0.8537);">Placas:<i class="bl"></i></span>
<span class="t" id="t66" style="font-size:12.5px;font-weight:400;color:#111;left:848.70px;top:279.00px;transform:scaleX(0.8417);">Rendimiento:<i class="bl"></i></span>
<span class="t" id="t67" style="font-size:12.5px;font-weight:400;color:#ababab;left:915.20px;top:198.00px;transform:scaleX(0.8436);">Odometro<i class="bl"></i></span>
<span class="t" id="t68" style="font-size:12.5px;font-weight:400;color:#ababab;left:943.40px;top:218.00px;transform:scaleX(0.8629);">10<i class="bl"></i></span>
<span class="t" id="t69" style="font-size:12.5px;font-weight:400;color:#ababab;left:915.20px;top:239.00px;transform:scaleX(0.8919);">Blanco<i class="bl"></i></span>
<span class="t" id="t70" style="font-size:12.5px;font-weight:400;color:#ababab;left:915.20px;top:259.00px;transform:scaleX(0.8869);">VL37174<i class="bl"></i></span>
<span class="t" id="t71" style="font-size:12.5px;font-weight:400;color:#ababab;left:988.40px;top:279.00px;transform:scaleX(0.7910);">7<i class="bl"></i></span>
<span class="t" id="t72" style="font-size:12.5px;font-weight:400;color:#222;left:399.40px;top:369.00px;transform:scaleX(0.8471);">Tramite<i class="bl"></i></span>
<span class="t" id="t73" style="font-size:12.5px;font-weight:400;color:#222;left:584.40px;top:369.00px;transform:scaleX(0.8529);">Última fecha de realización<i class="bl"></i></span>
<span class="t" id="t74" style="font-size:12.5px;font-weight:400;color:#222;left:725.40px;top:369.00px;transform:scaleX(0.8550);">Próxima Fecha de realización<i class="bl"></i></span>
<span class="t" id="t75" style="font-size:12.5px;font-weight:400;color:#222;left:877.00px;top:369.00px;transform:scaleX(0.8654);">Fecha Pospuesta<i class="bl"></i></span>
<span class="t" id="t76" style="font-size:12.5px;font-weight:400;color:#222;left:884.70px;top:382.00px;transform:scaleX(0.8699);">por el Usuario<i class="bl"></i></span>
<span class="t" id="t77" style="font-size:12.5px;font-weight:400;color:#222;left:1059.40px;top:369.00px;transform:scaleX(0.8550);">Status<i class="bl"></i></span>
<span class="t" id="t78" style="font-size:12.5px;font-weight:400;color:#333;left:279.60px;top:402.00px;transform:scaleX(0.8491);">Alta de Placas Federales<i class="bl"></i></span>
<span class="t" id="t79" style="font-size:12.5px;font-weight:400;color:#333;left:1015.00px;top:402.00px;transform:scaleX(0.8485);">No programado<i class="bl"></i></span>
<span class="t" id="t80" style="font-size:12.5px;font-weight:400;color:#333;left:279.60px;top:421.00px;transform:scaleX(0.8627);">Altas de Placas Locales<i class="bl"></i></span>
<span class="t" id="t81" style="font-size:12.5px;font-weight:400;color:#333;left:1015.00px;top:421.00px;transform:scaleX(0.8485);">No programado<i class="bl"></i></span>
<span class="t" id="t82" style="font-size:12.5px;font-weight:400;color:#333;left:279.60px;top:440.00px;transform:scaleX(0.8661);">Autorización ante Ecología<i class="bl"></i></span>
<span class="t" id="t83" style="font-size:12.5px;font-weight:400;color:#333;left:1015.00px;top:440.00px;transform:scaleX(0.8485);">No programado<i class="bl"></i></span>
<span class="t" id="t84" style="font-size:12.5px;font-weight:400;color:#333;left:279.60px;top:459.00px;transform:scaleX(0.8494);">Baja de Placas Federales<i class="bl"></i></span>
<span class="t" id="t85" style="font-size:12.5px;font-weight:400;color:#333;left:1015.00px;top:459.00px;transform:scaleX(0.8485);">No programado<i class="bl"></i></span>
<span class="t" id="t86" style="font-size:12.5px;font-weight:400;color:#333;left:279.60px;top:478.00px;transform:scaleX(0.8618);">Baja de Placas Locales<i class="bl"></i></span>
<span class="t" id="t87" style="font-size:12.5px;font-weight:400;color:#333;left:1015.00px;top:478.00px;transform:scaleX(0.8485);">No programado<i class="bl"></i></span>
<span class="t" id="t88" style="font-size:12.5px;font-weight:400;color:#333;left:279.60px;top:497.00px;transform:scaleX(0.8961);">Multa<i class="bl"></i></span>
<span class="t" id="t89" style="font-size:12.5px;font-weight:400;color:#333;left:1015.00px;top:497.00px;transform:scaleX(0.8485);">No programado<i class="bl"></i></span>
<span class="t" id="t90" style="font-size:12.5px;font-weight:400;color:#fff;left:279.60px;top:516.00px;transform:scaleX(0.8913);">Pago de Tenencia<i class="bl"></i></span>
<span class="t" id="t91" style="font-size:12.5px;font-weight:400;color:#fff;left:1015.00px;top:516.00px;transform:scaleX(0.8635);">Faltan 356 Días<i class="bl"></i></span>
<span class="t" id="t92" style="font-size:12.5px;font-weight:400;color:#333;left:279.60px;top:535.00px;transform:scaleX(0.8687);">Verificacion vehicular<i class="bl"></i></span>
<span class="t" id="t93" style="font-size:12.5px;font-weight:400;color:#333;left:1015.00px;top:535.00px;transform:scaleX(0.8485);">No programado<i class="bl"></i></span>
<span class="t" id="t94" style="font-size:12.5px;font-weight:400;color:#fff;left:575.40px;top:516.00px;transform:scaleX(0.9510);">25/09/2016<i class="bl"></i></span>
<span class="t" id="t95" style="font-size:12.5px;font-weight:400;color:#fff;left:723.40px;top:516.00px;transform:scaleX(0.9431);">25/09/2017<i class="bl"></i></span>
<span class="t" id="t96" style="font-size:12.5px;font-weight:400;color:#1590e0;left:202.10px;top:344.00px;transform:scaleX(0.8577);">Paquete de trámites asociado al vehículo<i class="bl"></i></span>
<span class="t" id="t97" style="font-size:12.5px;font-weight:400;color:#333;left:416.20px;top:344.00px;transform:scaleX(0.8268);">Historia de trámites realizados<i class="bl"></i></span>
<span class="t" id="t98" style="font-size:11.5px;font-weight:400;color:#2a2a2a;left:205.40px;top:821.00px;transform:scaleX(0.9596);">Total 8 Registros<i class="bl"></i></span>
<span class="t" id="t99" style="font-size:11.5px;font-weight:400;color:#222;left:105.90px;top:846.80px;transform:scaleX(0.9195);">Empresa: Empresa ACME, S.A. de C.V.<i class="bl"></i></span>
<span class="t" id="t100" style="font-size:11.5px;font-weight:400;color:#222;left:457.40px;top:846.80px;transform:scaleX(0.9490);">Administrador: Admin()<i class="bl"></i></span>
<span class="t" id="t101" style="font-size:11.5px;font-weight:400;color:#222;left:743.40px;top:846.80px;transform:scaleX(0.9110);">Access 2000<i class="bl"></i></span>
<span class="t" id="t102" style="font-size:11.5px;font-weight:400;color:#9a9a9a;left:938.90px;top:846.80px;transform:scaleX(0.8267);">CAPS<i class="bl"></i></span>
<span class="t" id="t103" style="font-size:11.5px;font-weight:400;color:#222;left:973.70px;top:846.80px;transform:scaleX(0.8663);">NUM<i class="bl"></i></span>
<span class="t" id="t104" style="font-size:11.5px;font-weight:400;color:#9a9a9a;left:1004.90px;top:846.80px;transform:scaleX(0.8179);">SCRL<i class="bl"></i></span>
<span class="t" id="t105" style="font-size:11.5px;font-weight:400;color:#9a9a9a;left:1040.80px;top:846.80px;transform:scaleX(0.9076);">INS<i class="bl"></i></span>
</body></html>
